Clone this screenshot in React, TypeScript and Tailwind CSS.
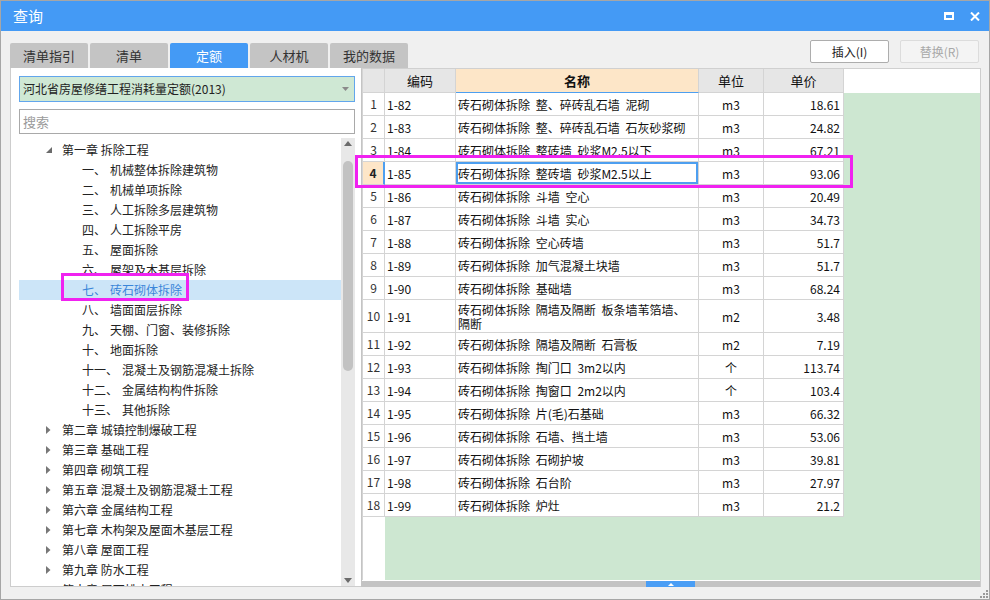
import React from 'react';

const FONT = '"Noto Sans CJK SC", "Noto Sans", sans-serif';

const tabs = ['清单指引', '清单', '定额', '人材机', '我的数据'];

const subs: [string, string][] = [
  ['一', '机械整体拆除建筑物'],
  ['二', '机械单项拆除'],
  ['三', '人工拆除多层建筑物'],
  ['四', '人工拆除平房'],
  ['五', '屋面拆除'],
  ['六', '屋架及木基层拆除'],
  ['七', '砖石砌体拆除'],
  ['八', '墙面面层拆除'],
  ['九', '天棚、门窗、装修拆除'],
  ['十', '地面拆除'],
  ['十一', '混凝土及钢筋混凝土拆除'],
  ['十二', '金属结构构件拆除'],
  ['十三', '其他拆除'],
];

const chapters = [
  '第二章 城镇控制爆破工程',
  '第三章 基础工程',
  '第四章 砌筑工程',
  '第五章 混凝土及钢筋混凝土工程',
  '第六章 金属结构工程',
  '第七章 木构架及屋面木基层工程',
  '第八章 屋面工程',
  '第九章 防水工程',
  '第十章 屋面排水工程',
];

interface Row {
  no: number;
  code: string;
  name: React.ReactNode;
  unit: string;
  price: string;
  tall?: boolean;
}

const P = '砖石砌体拆除 ';

const rows: Row[] = [
  { no: 1, code: '1-82', name: P + '整、碎砖乱石墙 泥砌', unit: 'm3', price: '18.61' },
  { no: 2, code: '1-83', name: P + '整、碎砖乱石墙 石灰砂浆砌', unit: 'm3', price: '24.82' },
  { no: 3, code: '1-84', name: P + '整砖墙 砂浆M2.5以下', unit: 'm3', price: '67.21' },
  { no: 4, code: '1-85', name: P + '整砖墙 砂浆M2.5以上', unit: 'm3', price: '93.06' },
  { no: 5, code: '1-86', name: P + '斗墙 空心', unit: 'm3', price: '20.49' },
  { no: 6, code: '1-87', name: P + '斗墙 实心', unit: 'm3', price: '34.73' },
  { no: 7, code: '1-88', name: P + '空心砖墙', unit: 'm3', price: '51.7' },
  { no: 8, code: '1-89', name: P + '加气混凝土块墙', unit: 'm3', price: '51.7' },
  { no: 9, code: '1-90', name: P + '基础墙', unit: 'm3', price: '68.24' },
  {
    no: 10,
    code: '1-91',
    name: (
      <>
        {P}隔墙及隔断 板条墙苇箔墙、
        <br />
        隔断
      </>
    ),
    unit: 'm2',
    price: '3.48',
    tall: true,
  },
  { no: 11, code: '1-92', name: P + '隔墙及隔断 石膏板', unit: 'm2', price: '7.19' },
  { no: 12, code: '1-93', name: P + '掏门口 3m2以内', unit: '个', price: '113.74' },
  { no: 13, code: '1-94', name: P + '掏窗口 2m2以内', unit: '个', price: '103.4' },
  { no: 14, code: '1-95', name: P + '片(毛)石基础', unit: 'm3', price: '66.32' },
  { no: 15, code: '1-96', name: P + '石墙、挡土墙', unit: 'm3', price: '53.06' },
  { no: 16, code: '1-97', name: P + '石砌护坡', unit: 'm3', price: '39.81' },
  { no: 17, code: '1-98', name: P + '石台阶', unit: 'm3', price: '27.97' },
  { no: 18, code: '1-99', name: P + '炉灶', unit: 'm3', price: '21.2' },
];

function Collapsed() {
  return (
    <svg width="5" height="8" viewBox="0 0 5 8">
      <polygon points="0,0 4.5,4 0,8" fill="#777" />
    </svg>
  );
}

function Expanded() {
  return (
    <svg width="7" height="7" viewBox="0 0 7 7">
      <polygon points="6,0 6,6 0,6" fill="#6b6b6b" />
    </svg>
  );
}

function Tree() {
  return (
    <div className="flex-1 min-w-0 overflow-hidden pt-[2px] text-[12px] text-[#222]">
      <div className="h-[20px] flex items-center pl-[27px]">
        <span className="w-[7px] flex items-center">
          <Expanded />
        </span>
        <span className="ml-[9px] whitespace-nowrap">第一章 拆除工程</span>
      </div>
      {subs.map(([n, t]) => {
        const sel = n === '七';
        return (
          <div
            key={n}
            className={
              sel
                ? 'h-[20px] flex items-center pl-[63px] whitespace-nowrap bg-[#cce5f8] text-[#3b86d9]'
                : 'h-[20px] flex items-center pl-[63px] whitespace-nowrap'
            }
          >
            <span>{n}、</span>
            <span className="ml-[4px]">{t}</span>
          </div>
        );
      })}
      {chapters.map((c) => (
        <div key={c} className="h-[20px] flex items-center pl-[27px]">
          <span className="w-[7px] flex items-center">
            <Collapsed />
          </span>
          <span className="ml-[9px] whitespace-nowrap">{c}</span>
        </div>
      ))}
    </div>
  );
}

function VScroll() {
  return (
    <div className="w-[14px] bg-[#e8e8e8] flex flex-col items-center">
      <svg className="mt-[3px]" width="8" height="5" viewBox="0 0 8 5">
        <polygon points="4,0 8,5 0,5" fill="#6b6b6b" />
      </svg>
      <div className="mt-[15px] w-[10px] h-[210px] rounded-full bg-[#c2c2c2]" />
      <svg className="mt-auto mb-[3px]" width="8" height="5" viewBox="0 0 8 5">
        <polygon points="0,0 8,0 4,5" fill="#6b6b6b" />
      </svg>
    </div>
  );
}

function Table() {
  const cell = 'border-r border-b border-[#d4d4d4] flex items-center overflow-hidden';
  return (
    <div className="grid grid-cols-[22px_71px_243px_65px_80px] border-l border-[#d4d4d4] text-[12px] text-[#111]">
      <div className={cell + ' h-[24px] bg-[#e6e6e6]'} />
      <div className={cell + ' h-[24px] bg-[#e6e6e6] justify-center text-[13px]'}>编码</div>
      <div className="h-[24px] border-r border-b border-[#d4d4d4] border-b-[#4d9ff0] bg-[#fde6c8] flex items-center justify-center text-[13px] font-bold">
        名称
      </div>
      <div className={cell + ' h-[24px] bg-[#e6e6e6] justify-center text-[13px]'}>单位</div>
      <div className={cell + ' h-[24px] bg-[#e6e6e6] justify-center text-[13px]'}>单价</div>
      {rows.map((r) => {
        const h = r.tall ? ' h-[33px]' : ' h-[23px]';
        const active = r.no === 4;
        return (
          <React.Fragment key={r.no}>
            <div
              className={
                active
                  ? 'h-[23px] border-b border-[#d4d4d4] border-r-2 border-r-[#4d9ff0] bg-[#fde6c8] flex items-center justify-center font-bold text-[#222]'
                  : cell + h + ' justify-center text-[#333]'
              }
            >
              {r.no}
            </div>
            <div className={cell + h + ' pl-[2px] pt-[1px]'}>{r.code}</div>
            <div
              className={
                cell +
                h +
                ' pl-[2px] pt-[1px] leading-[14px] whitespace-nowrap [word-spacing:3px]' +
                (active ? ' shadow-[inset_0_0_0_2px_#4d9ff0]' : '')
              }
            >
              <span>{r.name}</span>
            </div>
            <div className={cell + h + ' justify-center pt-[1px]'}>{r.unit}</div>
            <div className={cell + h + ' justify-end pr-[3px] pt-[1px]'}>{r.price}</div>
          </React.Fragment>
        );
      })}
    </div>
  );
}

export default function App() {
  return (
    <div
      className="relative w-[990px] h-[600px] border border-[#a6a6a6] bg-[#f0f0f0] flex flex-col overflow-hidden"
      style={{ fontFamily: FONT }}
    >
      {/* title bar */}
      <div className="h-[30px] shrink-0 bg-[#449af5] flex items-center pl-[12px] text-white text-[15px]">
        <span>查询</span>
        <div className="ml-auto flex items-center gap-[16px] pr-[9px]">
          <div className="w-[10px] h-[8px] border-2 border-t-[3px] border-white" />
          <svg width="10" height="9" viewBox="0 0 10 9">
            <path d="M1 0.5 L9 8.5 M9 0.5 L1 8.5" stroke="#fff" strokeWidth="2" />
          </svg>
        </div>
      </div>

      {/* tabs + buttons */}
      <div className="h-[37px] shrink-0 flex pl-[9px] pr-[9px]">
        <div className="flex items-end gap-[2px]">
          {tabs.map((t) => (
            <div
              key={t}
              className={
                t === '定额'
                  ? 'w-[78px] h-[25px] rounded-t-[2px] bg-[#449af5] text-white flex items-center justify-center text-[13px]'
                  : 'w-[78px] h-[25px] rounded-t-[2px] bg-[#c4c4c4] text-[#333] flex items-center justify-center text-[13px]'
              }
            >
              {t}
            </div>
          ))}
        </div>
        <div className="ml-auto mt-[9px] flex gap-[11px] pr-[1px]">
          <div className="w-[79px] h-[23px] rounded-[2px] border border-[#adadad] bg-white flex items-center justify-center text-[12px] text-[#222]">
            插入(I)
          </div>
          <div className="w-[79px] h-[23px] rounded-[2px] border border-[#dcdcdc] bg-[#f4f4f4] flex items-center justify-center text-[12px] text-[#a8a8a8]">
            替换(R)
          </div>
        </div>
      </div>

      {/* content */}
      <div className="h-[519px] shrink-0 flex ml-[9px]">
        {/* left panel */}
        <div className="w-[351px] bg-white border-l border-b border-[#cdcdcd] flex flex-col pl-[8px] pr-[6px] pt-[8px]">
          <div className="h-[26px] shrink-0 border border-[#62a6ec] bg-[#cfe8d4] flex items-center pl-[3px] text-[12px] text-[#222]">
            <span>河北省房屋修缮工程消耗量定额(2013)</span>
            <svg className="ml-auto mr-[5px]" width="7" height="4" viewBox="0 0 7 4">
              <polygon points="0,0 7,0 3.5,4" fill="#8a8a8a" />
            </svg>
          </div>
          <div className="mt-[7px] h-[25px] shrink-0 border border-[#a9a9a9] bg-white flex items-center pl-[3px] text-[13px] text-[#9a9a9a]">
            搜索
          </div>
          <div className="mt-[4px] flex-1 min-h-0 flex">
            <Tree />
            <VScroll />
          </div>
        </div>

        {/* right panel */}
        <div className="w-[620px] bg-white border-l border-l-[#c4c4c4] border-t border-t-[#d0d0d0] border-r border-r-[#cdcdcd] flex flex-col">
          <div className="flex">
            <Table />
            <div className="flex-1 flex flex-col">
              <div className="h-[24px] bg-white" />
              <div className="flex-1 bg-[#cde7d1]" />
            </div>
          </div>
          <div className="flex-1 flex">
            <div className="w-[23px] border-l border-[#d4d4d4] bg-white" />
            <div className="flex-1 bg-[#cde7d1]" />
          </div>
          <div className="mt-[1px] h-[6px] bg-[#c3c3c3] flex pl-[284px]">
            <div className="w-[49px] h-full bg-[#4a9ef5] flex items-center justify-center">
              <svg width="6" height="3" viewBox="0 0 6 3">
                <polygon points="3,0 6,3 0,3" fill="#fff" />
              </svg>
            </div>
          </div>
        </div>
      </div>

      {/* annotation boxes */}
      <div className="absolute left-[60px] top-[272px] w-[128px] h-[28px] border-[3px] border-[#f022f0]" />
      <div className="absolute left-[354px] top-[154px] w-[498px] h-[33px] border-[3px] border-[#f022f0]" />

      {/* resize grip */}
      <svg className="absolute right-[1px] bottom-[1px]" width="8" height="8" viewBox="0 0 8 8">
        <rect x="6" y="0" width="2" height="2" fill="#9a9a9a" />
        <rect x="3" y="3" width="2" height="2" fill="#9a9a9a" />
        <rect x="6" y="3" width="2" height="2" fill="#9a9a9a" />
        <rect x="0" y="6" width="2" height="2" fill="#9a9a9a" />
        <rect x="3" y="6" width="2" height="2" fill="#9a9a9a" />
        <rect x="6" y="6" width="2" height="2" fill="#9a9a9a" />
      </svg>
    </div>
  );
}
